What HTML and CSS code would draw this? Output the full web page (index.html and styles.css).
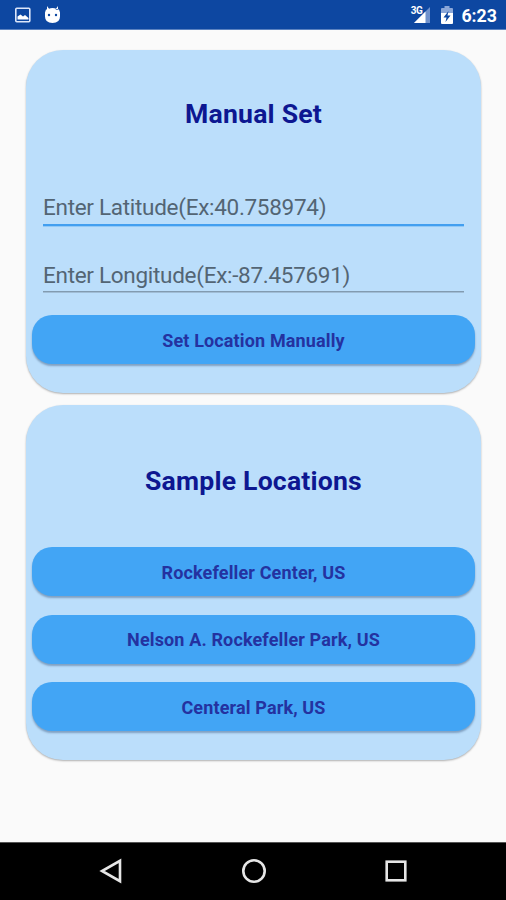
FILE: index.html
```html
<!DOCTYPE html>
<html lang="en">
<head>
<meta charset="utf-8">
<title>Set Location</title>
<link rel="stylesheet" href="styles.css">
</head>
<body>
<header class="status">
  <svg class="status-left" width="50" height="30" viewBox="0 0 50 30">
    <rect x="0.800" y="8.300" width="14" height="13.500" rx="1" fill="none" stroke="#dce6fa" stroke-width="1.6"/>
    <path d="M2.500 19.500v-3l3-2 2.500 2 2-1.500 3.500 3v1.500z" fill="#fff"/>
    <path d="M31 9.500 33.500 9Q37.500 7 41.500 9L44 9.500 45 12.500V16.500Q45 23 37.500 23T30 16.500v-4zM32 10V6l2.500 3.500M43 10V6l-2.500 3.500" fill="#fff"/>
    <circle cx="34" cy="15" r="1.200" fill="#0d47a1"/><circle cx="41" cy="15" r="1.200" fill="#0d47a1"/>
  </svg>
  <div class="status-right">
    <span class="network">3G</span>
    <svg class="signal" width="18" height="16" viewBox="0 0 18 16">
      <path d="M17 0v16H1z" fill="#6f91cc"/><path d="M12.500 4.500V16H1z" fill="#fff"/>
    </svg>
    <svg class="battery" width="12" height="18" viewBox="0 0 12 18">
      <path d="M3.500 2V0h5v2H11q1 0 1 1v4H0V3q0-1 1-1z" fill="#8ba7d8"/>
      <path d="M0 7h12v10q0 1-1 1H1q-1 0-1-1z" fill="#fff"/>
      <path d="M7.500 5 2.500 11.500h3L4.500 16l5-6.500h-3z" fill="#0d47a1"/>
    </svg>
    <span class="clock">6:23</span>
  </div>
</header>
<main class="content">
  <section class="card manual">
    <h2 class="title">Manual Set</h2>
    <div class="field focused"><span class="hint">Enter Latitude(Ex:40.758974)</span></div>
    <div class="field"><span class="hint">Enter Longitude(Ex:-87.457691)</span></div>
    <button class="action">Set Location Manually</button>
  </section>
  <section class="card samples">
    <h2 class="title">Sample Locations</h2>
    <div class="list">
      <button class="action">Rockefeller Center, US</button>
      <button class="action">Nelson A. Rockefeller Park, US</button>
      <button class="action">Centeral Park, US</button>
    </div>
  </section>
</main>
<nav class="nav">
  <svg width="26" height="26" viewBox="0 0 26 26"><path d="M22 2.800v20.400L4 13z"/></svg>
  <svg width="26" height="26" viewBox="0 0 26 26"><circle cx="13" cy="13" r="10.700"/></svg>
  <svg width="26" height="26" viewBox="0 0 26 26"><rect x="3.700" y="3.700" width="18.600" height="18.600"/></svg>
</nav>
</body>
</html>
```

FILE: styles.css
```css
* { box-sizing: border-box; }
body {
  margin: 0;
  width: 506px;
  height: 900px;
  display: flex;
  flex-direction: column;
  background: #fafafa;
  font-family: Roboto, "Liberation Sans", sans-serif;
  overflow: hidden;
}
.status {
  height: 30px;
  flex: none;
  display: flex;
  justify-content: space-between;
  padding: 0 9px 0 15px;
  background: #0d47a1;
  border-bottom: 1px solid #5b82c0;
  color: #fff;
}
.status-right { display: flex; height: 30px; align-items: center; }
.network { font-size: 10px; line-height: 10px; font-weight: 700; letter-spacing: -.5px; align-self: flex-start; margin: 6px -9px 0 0; z-index: 1; }
.signal { margin: 0 10px 0 0; }
.battery { margin-right: 8px; }
.clock { font-size: 17.800px; font-weight: 700; line-height: 30px; padding-top: 2px; }
.content {
  flex: 1;
  display: flex;
  flex-direction: column;
  gap: 12px;
  padding: 20px 25px 0 26px;
}
.card {
  display: flex;
  flex-direction: column;
  padding: 0 6px;
  border-radius: 37px;
  background: #bbdefb;
  box-shadow: 0 1px 2px rgba(0, 0, 0, .3);
}
.manual { height: 343px; }
.samples { height: 355px; }
.title {
  margin: 47px 0 0;
  line-height: 34px;
  font-size: 26.600px;
  font-weight: 700;
  letter-spacing: .2px;
  text-align: center;
  color: #0d1791;
}
.manual .title { margin-bottom: 60px; }
.samples .title { margin: 59px 0 49px; }
.field {
  height: 35px;
  margin: 0 11px 23px;
  border-bottom: 1px solid #829bb0;
  box-shadow: 0 1px 0 #a0bdd6;
}
.focused { margin-bottom: 31px; border-bottom: 2px solid #429ff0; box-shadow: 0 1px 0 #91c9f7; }
.hint { line-height: 33px; font-size: 22.5px; letter-spacing: -.29px; color: #536574; white-space: nowrap; display: block; }
.field:not(.focused) .hint { line-height: 37px; }
.action {
  height: 49px;
  flex: none;
  padding: 1px 0 0;
  border: 0;
  border-radius: 20px;
  background: #42a5f5;
  box-shadow: 0 2px 2px rgba(40, 70, 110, .4);
  font: 700 18px Roboto, "Liberation Sans", sans-serif;
  letter-spacing: .14px;
  color: #2432a0;
}
.list { display: flex; flex-direction: column; gap: 18.500px; }
.nav {
  height: 58px;
  flex: none;
  display: flex;
  justify-content: space-between;
  align-items: center;
  padding: 0 97px 2px 98px;
  background: #000;
  border-top: 1px solid #555;
}
.nav svg { fill: none; stroke: #e6e6e6; stroke-width: 2.600; }
```
